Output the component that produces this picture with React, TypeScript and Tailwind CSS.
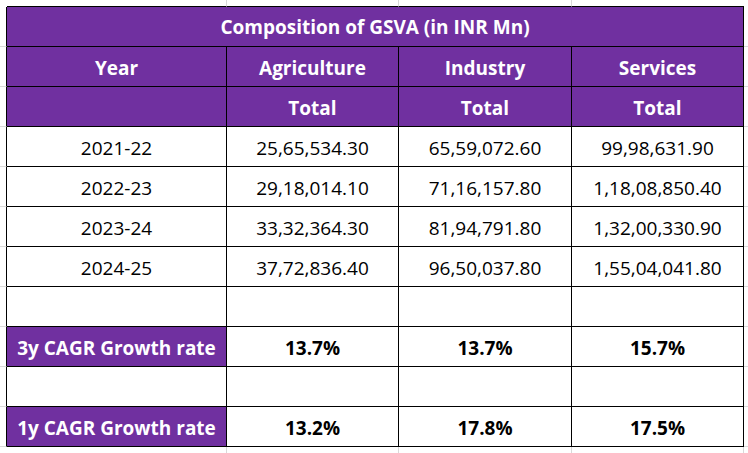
const purple = "bg-[#7030a0] text-white font-bold";

const rows = [
  ["2021-22", "25,65,534.30", "65,59,072.60", "99,98,631.90"],
  ["2022-23", "29,18,014.10", "71,16,157.80", "1,18,08,850.40"],
  ["2023-24", "33,32,364.30", "81,94,791.80", "1,32,00,330.90"],
  ["2024-25", "37,72,836.40", "96,50,037.80", "1,55,04,041.80"],
];

// Excel gridline ticks outside the bordered table
function Edge({ r, b }: { r?: boolean; b?: boolean }) {
  return (
    <div
      className={`${r ? "border-r border-r-[#d9d9d9]" : ""} ${
        b ? "border-b border-b-[#d9d9d9]" : ""
      }`}
    />
  );
}

function Cell({
  children,
  className = "",
}: {
  children?: React.ReactNode;
  className?: string;
}) {
  return (
    <div
      className={`flex items-center justify-center border-r border-b border-black pt-[3px] ${className}`}
    >
      {children}
    </div>
  );
}

function Row({
  cells,
  first = "",
  rest = "",
}: {
  cells: string[];
  first?: string;
  rest?: string;
}) {
  return (
    <>
      <div className="border-r border-b border-r-black border-b-[#d9d9d9]" />
      <Cell className={first}>{cells[0]}</Cell>
      <Cell className={rest}>{cells[1]}</Cell>
      <Cell className={rest}>{cells[2]}</Cell>
      <Cell className={rest}>{cells[3]}</Cell>
      <Edge b />
    </>
  );
}

export default function App() {
  return (
    <div
      className="grid h-[453px] w-[748px] grid-cols-[7px_220px_172px_173px_172px_1fr] grid-rows-[7px_repeat(11,40px)_1fr] bg-white text-[19px] text-black"
      style={{ fontFamily: '"Open Sans", sans-serif' }}
    >
      {/* top margin */}
      <div />
      <div className="border-r border-b border-r-[#d9d9d9] border-b-black" />
      <div className="border-r border-b border-r-[#d9d9d9] border-b-black" />
      <div className="border-r border-b border-r-[#d9d9d9] border-b-black" />
      <div className="border-b border-black" />
      <div />

      {/* title */}
      <div className="border-r border-b border-r-black border-b-[#d9d9d9]" />
      <div
        className={`col-span-4 flex items-center justify-center border-r border-b border-black pt-[2px] ${purple}`}
      >
        Composition of GSVA (in INR Mn)
      </div>
      <Edge b />

      <Row cells={["Year", "Agriculture", "Industry", "Services"]} first={purple} rest={purple} />
      <Row cells={["", "Total", "Total", "Total"]} first={purple} rest={purple} />

      {rows.map((r) => (
        <Row key={r[0]} cells={r} />
      ))}

      <Row cells={["", "", "", ""]} />
      <Row cells={["3y CAGR Growth rate", "13.7%", "13.7%", "15.7%"]} first={purple} rest="font-bold" />
      <Row cells={["", "", "", ""]} />
      <Row cells={["1y CAGR Growth rate", "13.2%", "17.8%", "17.5%"]} first={purple} rest="font-bold" />

      {/* bottom margin */}
      <div />
      <Edge r />
      <Edge r />
      <Edge r />
      <Edge r />
      <div />
    </div>
  );
}
